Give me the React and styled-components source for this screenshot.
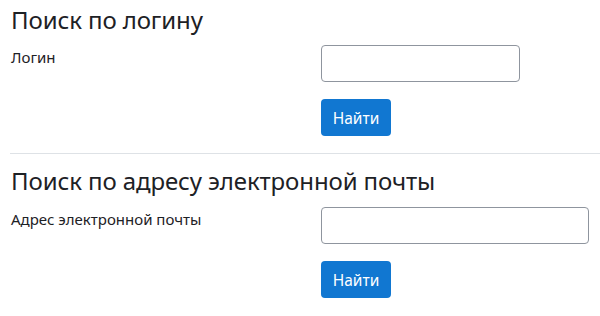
import React from "react";
import styled, { createGlobalStyle } from "styled-components";

const Global = createGlobalStyle`
  html, body { margin: 0; padding: 0; background: #fff; }
  body { font-family: "Noto Sans", "Open Sans", sans-serif; color: #1d2125; }
`;

const Page = styled.div`
  padding: 0 0 0 11px;
  width: 589px;
`;

const Section = styled.section`
  padding-top: ${p => p.$top}px;
  padding-bottom: ${p => p.$bottom}px;
  border-top: ${p => (p.$divider ? "1px solid #dee2e6" : "none")};
  margin-left: ${p => (p.$divider ? "-1px" : "0")};
  padding-left: ${p => (p.$divider ? "1px" : "0")};
`;

const Heading = styled.h3`
  margin: 0;
  font-size: 24px;
  font-weight: 400;
  line-height: 30px;
  letter-spacing: -0.1px;
`;

const FormRow = styled.div`
  display: grid;
  grid-template-columns: 310px 1fr;
  align-items: start;
  margin-top: ${p => p.$mt}px;
`;

const Label = styled.label`
  font-size: 15px;
  line-height: 20px;
  padding-top: 2px;
`;

const Input = styled.input`
  box-sizing: border-box;
  width: ${p => p.$w}px;
  height: 37px;
  border: 1px solid #8f959e;
  border-radius: 4px;
  background: #fff;
  padding: 6px 12px;
  font: inherit;
  outline: none;
`;

const Button = styled.button`
  box-sizing: border-box;
  width: 70px;
  height: 37px;
  border: none;
  border-radius: 4px;
  background: #1177d1;
  color: #fff;
  font-family: inherit;
  font-size: 15.5px;
  cursor: pointer;
`;

const Spacer = styled.div``;

function SearchBlock({ title, label, width, divider, top, headToRow, rowToBtn, bottom }) {
  return (
    <Section $divider={divider} $top={top} $bottom={bottom}>
      <Heading>{title}</Heading>
      <FormRow $mt={headToRow}>
        <Label>{label}</Label>
        <Input type="text" $w={width} />
      </FormRow>
      <FormRow $mt={rowToBtn}>
        <Spacer />
        <div><Button>Найти</Button></div>
      </FormRow>
    </Section>
  );
}

export default function App() {
  return (
    <>
      <Global />
      <Page>
        <SearchBlock
          title="Поиск по логину"
          label="Логин"
          width={199}
          top={5}
          headToRow={10}
          rowToBtn={17}
          bottom={17}
        />
        <SearchBlock
          title="Поиск по адресу электронной почты"
          label="Адрес электронной почты"
          width={268}
          divider
          top={12}
          headToRow={11}
          rowToBtn={17}
          bottom={0}
        />
      </Page>
    </>
  );
}
